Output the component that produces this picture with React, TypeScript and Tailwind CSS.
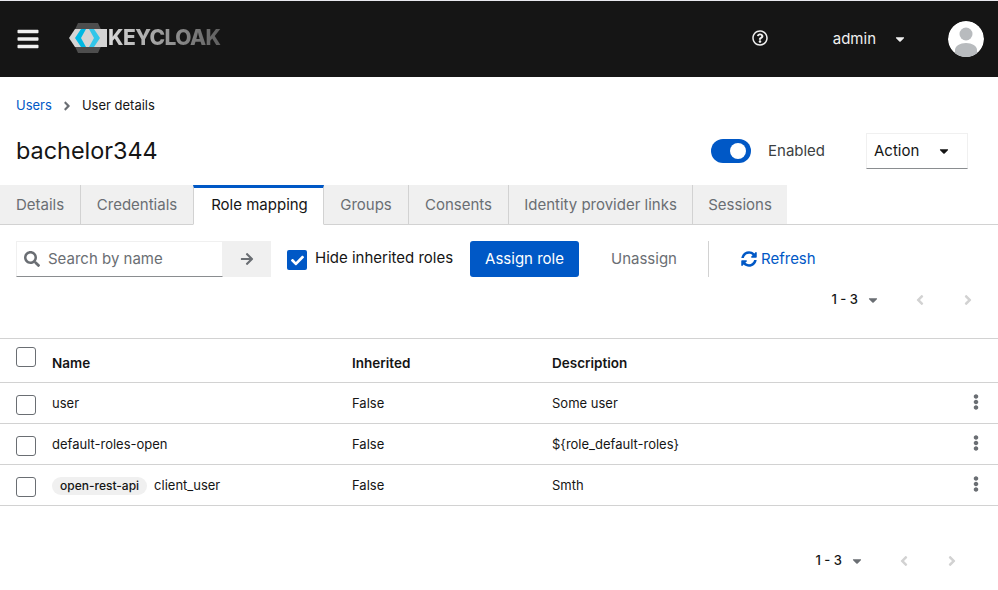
import React from "react";
import { FaSearch, FaArrowRight, FaSyncAlt, FaEllipsisV, FaAngleLeft, FaAngleRight, FaCaretDown, FaCheck, FaBars, FaRegQuestionCircle } from "react-icons/fa";

const tabs = [
  { t: "Details", w: "w-[81px]" },
  { t: "Credentials", w: "w-[113px]" },
  { t: "Role mapping", w: "w-[131px]" },
  { t: "Groups", w: "w-[85px]" },
  { t: "Consents", w: "w-[100px]" },
  { t: "Identity provider links", w: "w-[184px]" },
  { t: "Sessions", w: "w-[94px]" },
];

function Box({ className = "" }: { className?: string }) {
  return <span className={"block w-5 h-5 bg-white border border-[#6a6e73] rounded-[3px] " + className} />;
}

function Pager() {
  return (
    <div className="flex items-center h-5">
      <span className="text-[13px] font-medium text-[#151515]">1 - 3</span>
      <FaCaretDown className="ml-2 text-[#6a6e73] text-sm" />
      <FaAngleLeft className="ml-8 text-[#d2d2d2] text-base" />
      <FaAngleRight className="ml-8 text-[#d2d2d2] text-base" />
    </div>
  );
}

function Row({ name, chip, desc }: { name: string; chip?: string; desc: string }) {
  return (
    <div className="flex items-center h-[41px] border-b border-[#d2d2d2] text-[13px] text-[#151515]">
      <div className="w-[52px] pl-4 shrink-0 mt-1"><Box /></div>
      <div className="w-[300px] flex items-center shrink-0 mt-[2px]">
        {chip && <span className="bg-[#f0f0f0] rounded-full px-2 h-[18px] flex items-center text-xs font-medium mr-[7px]">{chip}</span>}
        {name}
      </div>
      <div className="w-[200px] shrink-0 mt-[2px]">False</div>
      <div className="flex-1 mt-[2px]">{desc}</div>
      <FaEllipsisV className="mr-[14px] text-[#6a6e73] text-base -mt-[2px]" />
    </div>
  );
}

export default function App() {
  return (
    <div className="w-[998px] h-[590px] bg-white overflow-hidden" style={{ fontFamily: '"Inter", "Liberation Sans", sans-serif' }}>
      <header className="h-[77px] bg-[#151515] border-t border-[#e8e8ee] flex items-center pl-4 pr-[14px] text-white">
        <FaBars className="text-2xl text-[#f0f0f0]" />
        <div className="flex items-center ml-[29px] -mt-[3px]">
          <svg width="38" height="32" viewBox="0 0 38 32" className="shrink-0">
            <polygon points="9,1 29,1 36,16 29,31 9,31 2,16" fill="#4d4d4d" />
            <polygon points="0,16 6,7 38,7 38,25 6,25" fill="#d4d4d4" />
            <polygon points="12,7 17,7 12,16 17,25 12,25 6,16" fill="#00b8e3" />
            <polygon points="20,7 25,7 31,16 25,25 20,25 25,16" fill="#33c6e9" />
          </svg>
          <span className="text-[21px] font-extrabold tracking-[-0.55px] ml-px bg-gradient-to-r from-[#d9d9d9] to-[#5e5e5e] bg-clip-text text-transparent">KEYCLOAK</span>
        </div>
        <div className="ml-auto flex items-center">
          <FaRegQuestionCircle className="text-base text-[#f0f0f0] -mt-[2px]" />
          <span className="ml-[65px] text-[15px] text-[#f0f0f0]">admin</span>
          <FaCaretDown className="ml-[17px] text-sm text-[#f0f0f0]" />
          <svg width="36" height="36" viewBox="0 0 36 36" className="ml-[41px] rounded-full">
            <circle cx="18" cy="18" r="18" fill="#fff" />
            <circle cx="18" cy="13" r="6.5" fill="#b8bbbe" />
            <path d="M7 36 L7 29 C7 25 12 22 18 22 C24 22 29 25 29 29 L29 36 Z" fill="#b8bbbe" />
          </svg>
        </div>
      </header>

      <nav className="flex items-center h-5 mt-[19px] pl-4 text-[13px] text-[#151515]">
        <span className="text-[#0058c6]">Users</span>
        <FaAngleRight className="mx-2 text-[#6a6e73] text-sm" />
        <span>User details</span>
      </nav>

      <div className="flex items-center h-9 mt-[17px] pl-4 pr-[30px]">
        <h1 className="text-[23.4px] font-normal text-[#151515]">bachelor344</h1>
        <div className="ml-auto flex items-center">
          <span className="relative block w-10 h-6 rounded-full bg-[#0058c6]">
            <span className="absolute right-[5px] top-[4px] w-4 h-4 rounded-full bg-white" />
          </span>
          <span className="ml-[17px] w-[58px] text-[15px] text-[#3c3f42]">Enabled</span>
          <div className="ml-10 w-[102px] h-9 flex items-center justify-between pl-[7px] pr-4 border border-[#f0f0f0] border-b-[#8a8d90] text-[15px] text-[#151515]">
            Action
            <FaCaretDown className="text-sm" />
          </div>
        </div>
      </div>

      <div className="flex h-10 mt-4 border-b border-[#d2d2d2] text-[15px]">
        {tabs.map(({ t, w }) => {
          const active = t === "Role mapping";
          return (
            <div
              key={t}
              className={
                active
                  ? "h-10 flex items-center justify-center pl-[2px] pb-[2px] -ml-px bg-white text-[#151515] border-t-[3px] border-[#0058c6] border-x border-x-[#d2d2d2] z-10 border-b border-b-white whitespace-nowrap " + w
                  : "h-[39px] flex items-center justify-center pt-px bg-[#f0f0f0] text-[#6a6e73] border-r border-[#d2d2d2] last:border-r-0 whitespace-nowrap " + w
              }
            >
              {t}
            </div>
          );
        })}
      </div>

      <div className="flex items-center h-9 mt-4 pl-4">
        <div className="flex items-center w-[207px] h-9 border border-[#f0f0f0] border-b-[#8a8d90] pl-[7px] text-[15px] text-[#6a6e73]">
          <FaSearch className="text-base text-[#6a6e73] mr-2" />
          Search by name
        </div>
        <div className="w-12 h-9 bg-[#f0f0f0] flex items-center justify-center">
          <FaArrowRight className="text-sm text-[#6a6e73]" />
        </div>
        <span className="ml-4 mt-0.5 w-5 h-5 rounded-[2px] bg-[#0058c6] flex items-center justify-center">
          <FaCheck className="text-white text-[13px]" />
        </span>
        <span className="ml-2 w-[139px] text-[15px] text-[#151515] -mt-[2px]">Hide inherited roles</span>
        <button className="ml-[16px] w-[109px] h-9 rounded-[3px] bg-[#0058c6] text-white text-[15px]">Assign role</button>
        <span className="ml-8 w-[65px] text-[15px] text-[#6a6e73] whitespace-nowrap">Unassign</span>
        <span className="ml-8 w-px h-9 bg-[#d2d2d2]" />
        <FaSyncAlt className="ml-8 text-[#0058c6] text-base" />
        <span className="ml-1 text-[15px] text-[#0058c6]">Refresh</span>
      </div>

      <div className="flex justify-end h-5 mt-[13px] pr-[22px]"><Pager /></div>

      <div className="mt-[28px] border-t border-[#d2d2d2]">
        <div className="flex items-center h-[44px] border-b border-[#d2d2d2] text-[13.5px] font-semibold text-[#151515]">
          <div className="w-[52px] pl-4 shrink-0 -mt-[8px]"><Box /></div>
          <div className="w-[300px] shrink-0 mt-[5px]">Name</div>
          <div className="w-[200px] shrink-0 mt-[5px]">Inherited</div>
          <div className="flex-1 mt-[5px]">Description</div>
        </div>
        <Row name="user" desc="Some user" />
        <Row name="default-roles-open" desc="${role_default-roles}" />
        <Row name="client_user" chip="open-rest-api" desc="Smth" />
      </div>

      <div className="flex justify-end h-5 mt-[45px] pr-[38px]"><Pager /></div>
    </div>
  );
}
